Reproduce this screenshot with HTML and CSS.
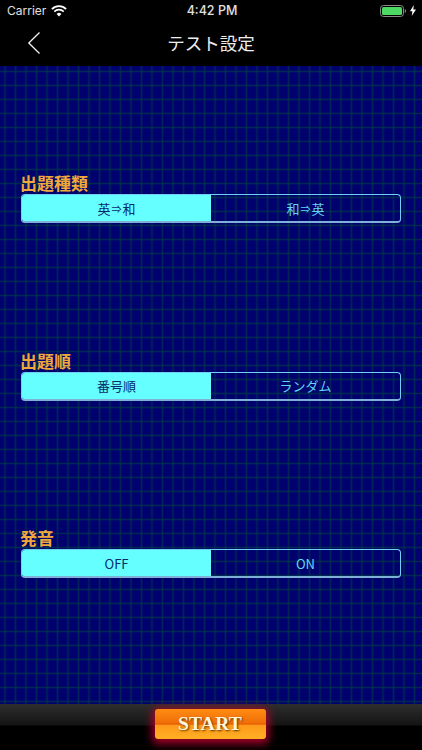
FILE: index.html
```html
<!DOCTYPE html>
<html lang="ja">
<head>
<meta charset="utf-8">
<title>テスト設定</title>
<link rel="stylesheet" href="styles.css">
</head>
<body>
<div class="app">
  <header class="top">
    <div class="status">
      <div class="status-left">
        <span>Carrier</span>
        <svg class="wifi" width="16" height="12" viewBox="0 0 16 12"><path d="M8 11.600 5.600 9a3.400 3.400 0 0 1 4.800 0z" fill="#fff"/><path d="M3.900 7.200a5.800 5.800 0 0 1 8.200 0l1.200-1.300a7.600 7.600 0 0 0-10.600 0z" fill="#fff"/><path d="M1.500 4.700a9.200 9.200 0 0 1 13 0l1.200-1.300a11 11 0 0 0-15.400 0z" fill="#fff"/></svg>
      </div>
      <div class="status-time">4:42 PM</div>
      <div class="status-right">
        <svg width="26" height="12" viewBox="0 0 26 12"><rect x=".5" y=".5" width="23" height="11" rx="3" fill="none" stroke="#8a8a8a"/><rect x="2" y="2" width="20" height="8" rx="1.500" fill="#4cd964"/><path d="M24.800 4v4c.8-.3 1.200-1.100 1.200-2s-.4-1.700-1.200-2z" fill="#8a8a8a"/></svg>
        <svg width="6" height="11" viewBox="0 0 6 11"><path d="M3.800 0 0 6.300h2.400L1.700 11 6 4.400H3.300z" fill="#fff"/></svg>
      </div>
    </div>
    <div class="nav">
      <svg class="back" width="14" height="24" viewBox="0 0 14 24"><path d="M12.500 1.500 1.800 12l10.700 10.500" fill="none" stroke="#f2f2f2" stroke-width="1.300"/></svg>
      <h1>テスト設定</h1>
    </div>
  </header>
  <main class="body">
    <section class="group">
      <h2>出題種類</h2>
      <div class="seg"><div class="opt on">英<span class="arrow">⇒</span>和</div><div class="opt">和<span class="arrow">⇒</span>英</div></div>
    </section>
    <section class="group">
      <h2>出題順</h2>
      <div class="seg"><div class="opt on">番号順</div><div class="opt">ランダム</div></div>
    </section>
    <section class="group">
      <h2>発音</h2>
      <div class="seg"><div class="opt on">OFF</div><div class="opt">ON</div></div>
    </section>
  </main>
  <footer class="foot">
    <button class="start">START</button>
  </footer>
</div>
</body>
</html>
```
FILE: styles.css
```css
* { box-sizing: border-box; }
html, body { margin: 0; padding: 0; }
body { background: #000; font-family: "Liberation Sans", "Noto Sans CJK JP", sans-serif; }
.app { width: 422px; height: 750px; display: flex; flex-direction: column; overflow: hidden; }
.top { height: 66px; background: #000; color: #fff; flex: none; }
.status { height: 21px; display: flex; align-items: center; justify-content: space-between; padding: 0 6px 0 7px; position: relative; font-family: Inter, "Liberation Sans", sans-serif; font-size: 12px; color: #e0e0e0; }
.status-left { display: flex; align-items: center; gap: 5px; }
.status-time { position: absolute; left: 2px; right: 0; text-align: center; font-size: 12.500px; font-weight: 500; }
.status-right { display: flex; align-items: center; gap: 4px; }
.nav { height: 44px; display: flex; align-items: center; justify-content: center; position: relative; }
.nav h1 { margin: 0 0 1px; font: 400 17.500px "Noto Sans CJK JP", sans-serif; color: #eeeeee; }
.back { position: absolute; left: 27px; top: 10px; }
.body {
  flex: 1;
  padding: 106px 21px 0;
  background-color: #00006e;
  background-image:
    linear-gradient(90deg, transparent 0, rgba(0,60,70,.65) 1.500px, transparent 3px),
    linear-gradient(180deg, transparent 0, rgba(0,60,70,.65) 1.500px, transparent 3px);
  background-size: 10.500px 14px;
  background-position: 3.500px 4px;
  display: flex;
  flex-direction: column;
  gap: 126.500px;
}
.group h2 { margin: 0 0 0 -1px; height: 22px; font: 700 17px/22px "Noto Sans CJK JP", sans-serif; color: #f0a83c; }
.seg { display: flex; height: 29px; width: 380px; border: 1.500px solid #6fcff5; border-bottom: 2px solid #7fb0d8; border-radius: 4px; overflow: hidden; }
.opt { flex: 1; display: flex; align-items: center; justify-content: center; font: 400 13px "Noto Sans CJK JP", "Liberation Sans", sans-serif; color: #66d4f8; }
.arrow { font-size: 10px; margin: 0 1px; }
.opt.on { background: #66ffff; color: #0a2a6a; }
.foot { height: 46px; flex: none; display: flex; justify-content: center; background: linear-gradient(180deg, #2e2e2e 0, #141414 21px, #000 22px); }
.start {
  margin: 5px 2px 0 0; width: 111px; height: 30px; border: 0; border-radius: 3px; padding: 0;
  background: linear-gradient(180deg, #ff8c14 0, #f07008 45%, #e85c06 50%, #ff9a1a 55%, #ffb024 100%);
  box-shadow: 0 2px 8px 3px rgba(200,0,50,.8);
  font: 700 19.500px "Liberation Serif", serif; letter-spacing: .2px; color: #fff5dc; text-shadow: 1px 1px 2px #5a3000;
}
```
